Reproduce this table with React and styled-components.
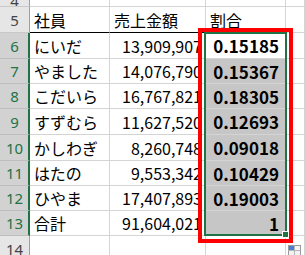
import React from "react";
import styled, { createGlobalStyle } from "styled-components";

const GlobalStyle = createGlobalStyle`
  html, body {
    margin: 0;
    padding: 0;
    background: #fff;
    overflow: hidden;
  }
  body {
    font-family: "Noto Sans CJK JP", "Noto Sans", sans-serif;
  }
`;

const rows = [
  { n: 6, name: "にいだ", sales: "13,909,907", ratio: "0.15185", h: 26 },
  { n: 7, name: "やました", sales: "14,076,790", ratio: "0.15367", h: 25 },
  { n: 8, name: "こだいら", sales: "16,767,821", ratio: "0.18305", h: 25 },
  { n: 9, name: "すずむら", sales: "11,627,520", ratio: "0.12693", h: 26 },
  { n: 10, name: "かしわぎ", sales: "8,260,748", ratio: "0.09018", h: 26 },
  { n: 11, name: "はたの", sales: "9,553,342", ratio: "0.10429", h: 25 },
  { n: 12, name: "ひやま", sales: "17,407,893", ratio: "0.19003", h: 25 },
  { n: 13, name: "合計", sales: "91,604,021", ratio: "1", h: 25 },
];

const Sheet = styled.div`
  position: relative;
  width: 305px;
  height: 255px;
  overflow: hidden;
`;

const Row = styled.div`
  display: flex;
  height: ${(p) => p.$h}px;
`;

const RowHead = styled.div`
  box-sizing: border-box;
  width: 30px;
  flex: none;
  display: flex;
  align-items: ${(p) => (p.$clip ? "flex-end" : "center")};
  justify-content: center;
  font-family: "Noto Sans", sans-serif;
  font-size: 15px;
  line-height: ${(p) => (p.$clip ? "10px" : "normal")};
  background: ${(p) => (p.$sel ? "#d2d2d2" : "#e6e6e6")};
  color: ${(p) => (p.$sel ? "#217346" : "#444")};
  border-bottom: 1px solid ${(p) => (p.$sel ? "#bdbdbd" : "#c8c8c8")};
  border-right: ${(p) => (p.$sel ? "2px solid #217346" : "1px solid #9f9f9f")};
  padding-left: ${(p) => (p.$sel ? "1px" : "0")};
  overflow: hidden;
`;

const Cell = styled.div`
  box-sizing: border-box;
  width: ${(p) => p.$w}px;
  flex: ${(p) => (p.$w ? "none" : "1")};
  display: flex;
  align-items: center;
  justify-content: ${(p) => (p.$right ? "flex-end" : "flex-start")};
  padding: ${(p) => (p.$right ? "0 3px 0 0" : "0 0 0 4px")};
  border-right: 1px solid #d4d4d4;
  border-bottom: 1px solid ${(p) => (p.$line ? "#000" : "#d4d4d4")};
  font-size: 16px;
  color: #000;
  white-space: nowrap;
  overflow: hidden;
  background: ${(p) => p.$bg || "#fff"};
`;

const Ratio = styled(Cell)`
  font-size: 17px;
  font-weight: 700;
  padding-right: 6px;
`;

const RedBox = styled.div`
  position: absolute;
  left: 198px;
  top: 28px;
  width: 95px;
  height: 215px;
  box-sizing: border-box;
  border: 4px solid #ff0000;
  pointer-events: none;
`;

const Selection = styled.div`
  position: absolute;
  left: 204px;
  top: 32px;
  width: 83px;
  height: 204px;
  box-sizing: border-box;
  border: 2px solid #217346;
  pointer-events: none;
`;

const FillHandle = styled.div`
  position: absolute;
  left: 282px;
  top: 231px;
  width: 5px;
  height: 5px;
  background: #217346;
  border: 1px solid #fff;
`;

const QuickIcon = styled.svg`
  position: absolute;
  left: 288px;
  top: 245px;
`;

export default function App() {
  return (
    <>
      <GlobalStyle />
      <Sheet>
        <Row $h={7}>
          <RowHead $clip>4</RowHead>
          <Cell $w={80} />
          <Cell $w={96} />
          <Cell $w={80} />
          <Cell />
        </Row>
        <Row $h={26}>
          <RowHead>5</RowHead>
          <Cell $w={80} $line>社員</Cell>
          <Cell $w={96} $line>売上金額</Cell>
          <Cell $w={80} $line>割合</Cell>
          <Cell />
        </Row>
        {rows.map((r, i) => (
          <Row key={r.n} $h={r.h}>
            <RowHead $sel>{r.n}</RowHead>
            <Cell $w={80}>{r.name}</Cell>
            <Cell $w={96} $right>
              {r.sales}
            </Cell>
            <Ratio $w={80} $right $bg={i === 0 ? "#fff" : "#c6c6c6"}>
              {r.ratio}
            </Ratio>
            <Cell />
          </Row>
        ))}
        <Row $h={26}>
          <RowHead>14</RowHead>
          <Cell $w={80} />
          <Cell $w={96} />
          <Cell $w={80} />
          <Cell />
        </Row>
        <Selection />
        <FillHandle />
        <RedBox />
        <QuickIcon width="14" height="12" viewBox="0 0 14 12">
          <rect x="0.5" y="0.5" width="12" height="10" fill="#f2f2f2" stroke="#9a9a9a" />
          <line x1="0.5" y1="5.5" x2="12.5" y2="5.5" stroke="#b5b5b5" />
          <line x1="6.5" y1="0.5" x2="6.5" y2="10.5" stroke="#b5b5b5" />
          <rect x="1" y="1" width="5" height="4" fill="#4a7fd6" />
        </QuickIcon>
      </Sheet>
    </>
  );
}
